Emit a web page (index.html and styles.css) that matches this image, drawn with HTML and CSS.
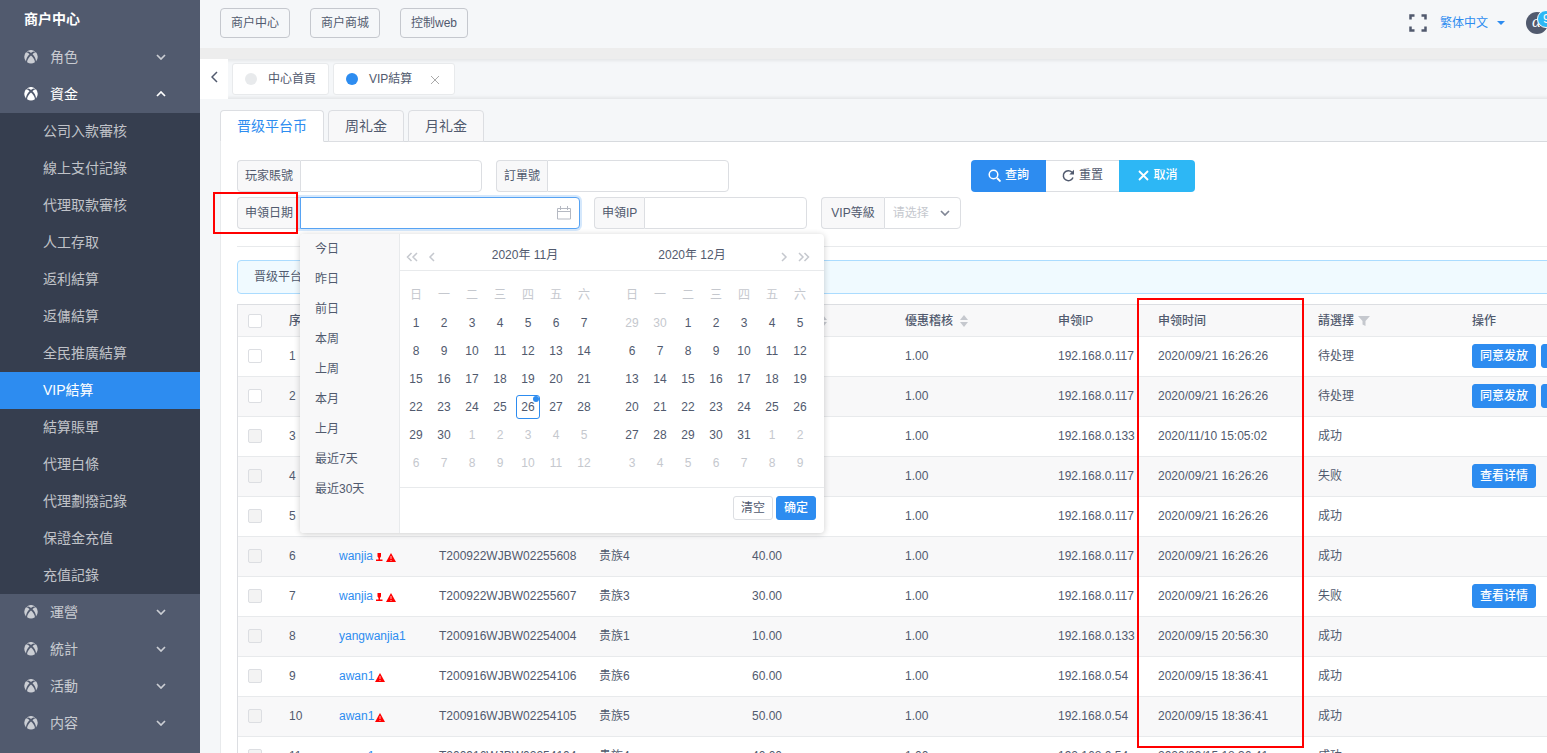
FILE: index.html
```html
<!DOCTYPE html>
<html lang="zh-Hans">
<head>
<meta charset="utf-8">
<title>VIP結算</title>
<link rel="stylesheet" href="styles.css">
</head>
<body>
<svg class="defs" aria-hidden="true">
  <symbol id="xbox" viewBox="0 0 14 14"><path fill="currentColor" d="M7 3.1C5.6 2 4 1.200 2.900 1.400A7 6.700 0 0 1 11.100 1.400C10 1.200 8.400 2 7 3.100ZM2 2.300C3.200 2.300 4.600 3.200 5.500 4.200C3.600 6.200 2 8.800 2 11.400A6.800 6.800 0 0 1 2 2.300ZM12 2.300A6.800 6.800 0 0 1 12 11.400C12 8.800 10.400 6.200 8.500 4.200C9.400 3.200 10.800 2.300 12 2.300ZM7 5.600C8.800 7.200 11 10 10.900 12.200A7 7 0 0 1 3.100 12.200C3 10 5.200 7.200 7 5.600Z"/></symbol>
  <symbol id="down" viewBox="0 0 10 6"><path d="M1 1l4 4 4-4" fill="none" stroke="currentColor" stroke-width="1.700"/></symbol>
  <symbol id="up" viewBox="0 0 10 6"><path d="M1 5l4-4 4 4" fill="none" stroke="currentColor" stroke-width="1.700"/></symbol>
  <symbol id="sort" viewBox="0 0 8 12"><path d="M0 5l4-5 4 5zM0 7l4 5 4-5z" fill="currentColor"/></symbol>
  <symbol id="warn" viewBox="0 0 10 9"><path d="M5 0l5 9H0z" fill="#f00"/><path d="M5 3v3M5 7v1" stroke="#fff" stroke-opacity=".7"/></symbol>
  <symbol id="person" viewBox="0 0 8 8"><path d="M2.500 0h3.500v3.500L5 5v1.500H7.500V8H1V6.500h2.500V5L2.500 3.500z" fill="#f00"/></symbol>
</svg>
<div class="app">
  <nav class="sidebar">
    <h1 class="brand">商户中心</h1>
    <button class="menu"><svg class="game"><use href="#xbox"/></svg><span>角色</span><svg class="chev"><use href="#down"/></svg></button>
    <button class="menu open"><svg class="game"><use href="#xbox"/></svg><span>資金</span><svg class="chev"><use href="#up"/></svg></button>
    <div class="submenu">
      <a href="#">公司入款審核</a>
      <a href="#">線上支付記錄</a>
      <a href="#">代理取款審核</a>
      <a href="#">人工存取</a>
      <a href="#">返利結算</a>
      <a href="#">返傭結算</a>
      <a href="#">全民推廣結算</a>
      <a href="#" class="current">VIP結算</a>
      <a href="#">結算賬單</a>
      <a href="#">代理白條</a>
      <a href="#">代理劃撥記錄</a>
      <a href="#">保證金充值</a>
      <a href="#">充值記錄</a>
    </div>
    <button class="menu"><svg class="game"><use href="#xbox"/></svg><span>運營</span><svg class="chev"><use href="#down"/></svg></button>
    <button class="menu"><svg class="game"><use href="#xbox"/></svg><span>統計</span><svg class="chev"><use href="#down"/></svg></button>
    <button class="menu"><svg class="game"><use href="#xbox"/></svg><span>活動</span><svg class="chev"><use href="#down"/></svg></button>
    <button class="menu"><svg class="game"><use href="#xbox"/></svg><span>内容</span><svg class="chev"><use href="#down"/></svg></button>
  </nav>

  <main class="main">
    <header class="topbar">
      <button class="link-btn">商户中心</button>
      <button class="link-btn">商户商城</button>
      <button class="link-btn">控制web</button>
      <div class="tools">
        <button class="full" aria-label="全屏"><svg viewBox="0 0 18 18"><path d="M1.500 5.500V1.500H5.500M12.500 1.500h4V5.500M16.500 12.500v4H12.500M5.500 16.500H1.500V12.500" fill="none" stroke="#515a6e" stroke-width="2.500"/></svg></button>
        <button class="lang">繁体中文<svg viewBox="0 0 8 4"><path d="M0 0h8L4 4z" fill="#2d8cf0"/></svg></button>
        <div class="avatar"><span class="face">α</span><span class="badge">9</span></div>
      </div>
    </header>
    <div class="tags">
      <button class="scroll" aria-label="向左"><svg viewBox="0 0 7 12"><path d="M6 1L1 6l5 5" fill="none" stroke="#515a6e" stroke-width="1.500"/></svg></button>
      <div class="tag"><i class="dot"></i>中心首頁</div>
      <div class="tag"><i class="dot on"></i>VIP結算<button class="close" aria-label="關閉"><svg viewBox="0 0 8 8"><path d="M0 0l8 8M8 0L0 8" stroke="#aaa" fill="none"/></svg></button></div>
    </div>

    <div class="page">
      <div class="tabs">
        <button class="tab active">晋级平台币</button>
        <button class="tab">周礼金</button>
        <button class="tab">月礼金</button>
      </div>
      <section class="card">
        <form class="filters">
          <div class="row">
            <div class="group"><label for="acc">玩家賬號</label><input id="acc" class="w-mid"></div>
            <div class="group"><label for="ord">訂單號</label><input id="ord" class="w-mid"></div>
            <div class="actions">
              <button type="button" class="act primary"><svg viewBox="0 0 13 13"><circle cx="5.500" cy="5.500" r="4.300" fill="none" stroke="currentColor" stroke-width="1.500"/><path d="M9 9l3.500 3.500" stroke="currentColor" stroke-width="1.800"/></svg>查詢</button>
              <button type="button" class="act plain"><svg viewBox="0 0 13 13"><path d="M11 8.500A5 5 0 1 1 10 3.200" fill="none" stroke="currentColor" stroke-width="1.500"/><path d="M12 .8v4.700H7.300z" fill="currentColor"/></svg>重置</button>
              <button type="button" class="act info"><svg viewBox="0 0 13 13"><path d="M2 2l9 9M11 2l-9 9" stroke="currentColor" stroke-width="1.800"/></svg>取消</button>
            </div>
          </div>
          <div class="row second">
            <div class="group date"><label for="date">申領日期</label><input id="date" class="w-date">
              <svg class="cal-icon" viewBox="0 0 14 14"><path d="M.5 2.500h13v10.500H.5zM.5 5.500h13M3.500 0v4M10.500 0v4" fill="none" stroke="#b5b9c2"/></svg>
              <div class="picker">
                <ul class="shortcuts"><li>今日</li><li>昨日</li><li>前日</li><li>本周</li><li>上周</li><li>本月</li><li>上月</li><li>最近7天</li><li>最近30天</li></ul>
                <div class="picker-body">
                  <div class="months">
                    <div class="month">
                      <div class="month-head"><span class="arrows"><svg viewBox="0 0 12 10"><path d="M5.500 1l-4 4 4 4M11 1L7 5l4 4"/></svg><svg viewBox="0 0 12 10"><path d="M8 1L4 5l4 4"/></svg></span><span class="title">2020年 11月</span></div>
                      <table class="days">
                        <tr><th>日</th><th>一</th><th>二</th><th>三</th><th>四</th><th>五</th><th>六</th></tr>
                        <tr><td>1</td><td>2</td><td>3</td><td>4</td><td>5</td><td>6</td><td>7</td></tr>
                        <tr><td>8</td><td>9</td><td>10</td><td>11</td><td>12</td><td>13</td><td>14</td></tr>
                        <tr><td>15</td><td>16</td><td>17</td><td>18</td><td>19</td><td>20</td><td>21</td></tr>
                        <tr><td>22</td><td>23</td><td>24</td><td>25</td><td><span class="today">26</span></td><td>27</td><td>28</td></tr>
                        <tr><td>29</td><td>30</td><td class="off">1</td><td class="off">2</td><td class="off">3</td><td class="off">4</td><td class="off">5</td></tr>
                        <tr class="off"><td>6</td><td>7</td><td>8</td><td>9</td><td>10</td><td>11</td><td>12</td></tr>
                      </table>
                    </div>
                    <div class="month">
                      <div class="month-head"><span class="title">2020年 12月</span><span class="arrows end"><svg viewBox="0 0 12 10"><path d="M4 1l4 4-4 4"/></svg><svg viewBox="0 0 12 10"><path d="M1 1l4 4-4 4M6.500 1l4 4-4 4"/></svg></span></div>
                      <table class="days">
                        <tr><th>日</th><th>一</th><th>二</th><th>三</th><th>四</th><th>五</th><th>六</th></tr>
                        <tr><td class="off">29</td><td class="off">30</td><td>1</td><td>2</td><td>3</td><td>4</td><td>5</td></tr>
                        <tr><td>6</td><td>7</td><td>8</td><td>9</td><td>10</td><td>11</td><td>12</td></tr>
                        <tr><td>13</td><td>14</td><td>15</td><td>16</td><td>17</td><td>18</td><td>19</td></tr>
                        <tr><td>20</td><td>21</td><td>22</td><td>23</td><td>24</td><td>25</td><td>26</td></tr>
                        <tr><td>27</td><td>28</td><td>29</td><td>30</td><td>31</td><td class="off">1</td><td class="off">2</td></tr>
                        <tr class="off"><td>3</td><td>4</td><td>5</td><td>6</td><td>7</td><td>8</td><td>9</td></tr>
                      </table>
                    </div>
                  </div>
                  <div class="confirm"><button type="button" class="small ghost">清空</button><button type="button" class="small">确定</button></div>
                </div>
              </div>
            </div>
            <div class="group"><label for="ip">申領IP</label><input id="ip" class="w-ip"></div>
            <div class="group vip"><label for="vip">VIP等級</label><select id="vip"><option>请选择</option></select><svg class="select-arrow"><use href="#down"/></svg></div>
          </div>
        </form>
        <div class="notice">晋级平台币</div>
        <table class="grid">
          <colgroup><col class="c-check"><col class="c-no"><col class="c-100"><col class="c-160"><col class="c-153"><col class="c-153"><col class="c-153"><col class="c-100"><col class="c-160"><col class="c-154"><col class="c-ops"></colgroup>
          <thead><tr><th class="chk"><input type="checkbox" aria-label="全選"></th><th>序</th><th></th><th></th><th></th><th class="sort-only"><span class="cell"><svg class="sort"><use href="#sort"/></svg></span></th><th><span class="cell">優惠稽核<svg class="sort"><use href="#sort"/></svg></span></th><th>申领IP</th><th>申领时间</th><th><span class="cell">請選擇<svg class="filter" viewBox="0 0 12 10"><path d="M0 0h12L7.500 5v5l-3-1.500V5z" fill="#c5c8ce"/></svg></span></th><th>操作</th></tr></thead>
          <tbody>
            <tr><td class="chk"><input type="checkbox" aria-label="1"></td><td>1</td><td></td><td></td><td></td><td></td><td>1.00</td><td>192.168.0.117</td><td>2020/09/21 16:26:26</td><td>待处理</td><td><div class="ops"><button class="small">同意发放</button><button class="small">拒绝发放</button></div></td></tr>
            <tr><td class="chk"><input type="checkbox" aria-label="2"></td><td>2</td><td></td><td></td><td></td><td></td><td>1.00</td><td>192.168.0.117</td><td>2020/09/21 16:26:26</td><td>待处理</td><td><div class="ops"><button class="small">同意发放</button><button class="small">拒绝发放</button></div></td></tr>
            <tr><td class="chk"><input type="checkbox" disabled aria-label="3"></td><td>3</td><td></td><td></td><td></td><td></td><td>1.00</td><td>192.168.0.133</td><td>2020/11/10 15:05:02</td><td>成功</td><td></td></tr>
            <tr><td class="chk"><input type="checkbox" disabled aria-label="4"></td><td>4</td><td></td><td></td><td></td><td></td><td>1.00</td><td>192.168.0.117</td><td>2020/09/21 16:26:26</td><td>失败</td><td><div class="ops"><button class="small">查看详情</button></div></td></tr>
            <tr><td class="chk"><input type="checkbox" disabled aria-label="5"></td><td>5</td><td></td><td></td><td></td><td></td><td>1.00</td><td>192.168.0.117</td><td>2020/09/21 16:26:26</td><td>成功</td><td></td></tr>
            <tr><td class="chk"><input type="checkbox" disabled aria-label="6"></td><td>6</td><td><a href="#">wanjia</a><svg class="person"><use href="#person"/></svg><svg class="warn"><use href="#warn"/></svg></td><td>T200922WJBW02255608</td><td>贵族4</td><td>40.00</td><td>1.00</td><td>192.168.0.117</td><td>2020/09/21 16:26:26</td><td>成功</td><td></td></tr>
            <tr><td class="chk"><input type="checkbox" disabled aria-label="7"></td><td>7</td><td><a href="#">wanjia</a><svg class="person"><use href="#person"/></svg><svg class="warn"><use href="#warn"/></svg></td><td>T200922WJBW02255607</td><td>贵族3</td><td>30.00</td><td>1.00</td><td>192.168.0.117</td><td>2020/09/21 16:26:26</td><td>失败</td><td><div class="ops"><button class="small">查看详情</button></div></td></tr>
            <tr><td class="chk"><input type="checkbox" disabled aria-label="8"></td><td>8</td><td><a href="#">yangwanjia1</a></td><td>T200916WJBW02254004</td><td>贵族1</td><td>10.00</td><td>1.00</td><td>192.168.0.133</td><td>2020/09/15 20:56:30</td><td>成功</td><td></td></tr>
            <tr><td class="chk"><input type="checkbox" disabled aria-label="9"></td><td>9</td><td><a href="#">awan1</a><svg class="warn"><use href="#warn"/></svg></td><td>T200916WJBW02254106</td><td>贵族6</td><td>60.00</td><td>1.00</td><td>192.168.0.54</td><td>2020/09/15 18:36:41</td><td>成功</td><td></td></tr>
            <tr><td class="chk"><input type="checkbox" disabled aria-label="10"></td><td>10</td><td><a href="#">awan1</a><svg class="warn"><use href="#warn"/></svg></td><td>T200916WJBW02254105</td><td>贵族5</td><td>50.00</td><td>1.00</td><td>192.168.0.54</td><td>2020/09/15 18:36:41</td><td>成功</td><td></td></tr>
            <tr><td class="chk"><input type="checkbox" disabled aria-label="11"></td><td>11</td><td><a href="#">awan1</a><svg class="warn"><use href="#warn"/></svg></td><td>T200916WJBW02254104</td><td>贵族4</td><td>40.00</td><td>1.00</td><td>192.168.0.54</td><td>2020/09/15 18:36:41</td><td>成功</td><td></td></tr>
          </tbody>
        </table>
      </section>
    </div>
  </main>
</div>
<div class="mark mark-date"></div>
<div class="mark mark-time"></div>
</body>
</html>
```

FILE: styles.css
```css
* { box-sizing: border-box; }
body { margin: 0; height: 100vh; overflow: hidden; position: relative; font: 12px/18px "Liberation Sans", "Noto Sans CJK SC", sans-serif; color: #515a6e; background: #f5f7f9; }
button, input, select { font: inherit; color: inherit; margin: 0; }
button { cursor: pointer; padding: 0; border: 0; background: none; white-space: nowrap; }
a { color: #2d8cf0; text-decoration: none; }
svg { flex: none; }
.defs { position: absolute; width: 0; height: 0; }
.app { display: flex; height: 100vh; }

.sidebar { flex: none; width: 200px; background: #515a6e; overflow: hidden; }
.brand { margin: 0; padding-left: 24px; height: 39px; font-size: 14px; line-height: 39px; color: #fff; }
.menu { display: flex; align-items: center; width: 100%; height: 37px; padding: 0 34px 2px 24px; font-size: 14px; color: rgba(255,255,255,.7); }
.menu span { flex: 1; margin-left: 12px; text-align: left; }
.menu.open { color: #fff; }
.game { width: 14px; height: 14px; }
.chev { width: 10px; height: 6px; }
.submenu { background: #363e4f; }
.submenu a { display: block; height: 37px; padding-left: 43px; font-size: 14px; line-height: 37px; color: rgba(255,255,255,.7); }
.submenu .current { background: #2d8cf0; color: #fff; }

.main { flex: 1; min-width: 0; overflow: hidden; }
.topbar { display: flex; align-items: flex-start; gap: 20px; height: 48px; padding: 8px 0 0 20px; }
.link-btn { height: 30px; padding: 0 10px; border: 1px solid #c5c8ce; border-radius: 4px; }
.tools { display: flex; align-items: center; height: 30px; margin-left: auto; }
.full { width: 18px; height: 18px; margin-right: 13px; }
.full svg { display: block; }
.lang { display: flex; align-items: center; gap: 9px; margin-right: 21px; color: #2d8cf0; }
.lang svg { width: 8px; height: 4px; }
.avatar { position: relative; width: 21px; height: 30px; overflow: hidden; }
.face { display: block; width: 22px; height: 22px; margin-top: 4px; border-radius: 11px; background: #515a6e; color: #fff; font: italic 17px/20px "Liberation Serif", serif; text-indent: 6px; }
.badge { position: absolute; left: 11px; top: 2px; width: 18px; height: 18px; border: 1px solid #fff; border-radius: 9px; background: #2db7f5; color: #fff; line-height: 16px; text-indent: 5px; }

.tags { display: flex; align-items: center; gap: 4px; height: 51px; margin-right: -5px; border-top: 11px solid #ededed; box-shadow: inset 0 0 3px 2px rgba(100,100,100,.1); }
.scroll { width: 28px; height: 40px; background: #fff; }
.scroll svg { width: 7px; height: 12px; }
.tag { display: flex; align-items: center; height: 32px; padding: 0 12px; border: 1px solid #e8eaec; border-radius: 3px; background: #fff; }
.dot { width: 12px; height: 12px; margin-right: 11px; border-radius: 6px; background: #e8eaec; }
.dot.on { background: #2d8cf0; }
.close { display: flex; margin: 2px 3px 0 19px; }
.close svg { width: 8px; height: 8px; }

.page { padding: 11px 0 0 20px; }
.tabs { display: flex; gap: 4px; height: 32px; border-bottom: 1px solid #d7dade; }
.tab { height: 32px; padding: 0 16px; border: 1px solid #dcdee2; border-radius: 4px 4px 0 0; background: #f8f8f9; font-size: 14px; }
.tab.active { background: #fff; border-bottom-color: #fff; color: #2d8cf0; }
.card { background: #fff; padding: 18px 0 0 16px; border-left: 1px solid #e8eaec; }
.filters { border-bottom: 1px solid #e8eaec; height: 87px; margin-bottom: 13px; }
.row { display: flex; align-items: center; gap: 14px; }
.second { margin-top: 5px; }
.group { display: flex; position: relative; height: 32px; }
.group label { padding: 0 7px; border: 1px solid #dcdee2; border-right: 0; border-radius: 4px 0 0 4px; background: #f8f8f9; line-height: 30px; white-space: nowrap; }
.group input, .group select { height: 32px; padding: 0 8px; border: 1px solid #dcdee2; border-radius: 0 4px 4px 0; background: #fff; outline: 0; }
.w-mid { width: 182px; }
.w-ip { width: 163px; }
.group .w-date { width: 280px; border-color: #57a3f3; box-shadow: 0 0 0 2px rgba(45,140,240,.2); }
.cal-icon { position: absolute; right: 9px; top: 9px; width: 14px; height: 14px; }
.vip label { padding: 0 9px; }
.group select { width: 77px; appearance: none; color: #c5c8ce; }
.select-arrow { position: absolute; right: 11px; top: 13px; width: 10px; height: 6px; color: #808695; pointer-events: none; }
.actions { display: flex; margin-left: 228px; }
.act { display: flex; align-items: center; justify-content: center; gap: 4px; width: 75px; height: 32px; padding-bottom: 2px; }
.act svg { width: 13px; height: 13px; }
.primary { background: #2d8cf0; color: #fff; font-weight: 500; border-radius: 4px 0 0 4px; }
.plain { width: 73px; border: 1px solid #dcdee2; border-width: 1px 0; }
.info { width: 76px; background: #2db7f5; color: #fff; font-weight: 500; border-radius: 0 4px 4px 0; }
.notice { height: 34px; margin-right: -20px; padding: 0 16px; border: 1px solid #abdcff; border-radius: 4px; background: #f0faff; line-height: 32px; }

.picker { position: absolute; z-index: 5; top: 37px; left: 63px; display: flex; width: 524px; height: 299px; border-radius: 4px; background: #fff; box-shadow: 0 1px 6px rgba(0,0,0,.2); overflow: hidden; }
.shortcuts { flex: none; width: 100px; margin: 0; padding: 0; list-style: none; background: #f8f8f9; border-right: 1px solid #e8eaec; }
.shortcuts li { padding-left: 15px; line-height: 30px; }
.picker-body { flex: 1; }
.months { display: flex; }
.month { flex: 1; }
.month-head { display: flex; height: 37px; border-bottom: 1px solid #e8eaec; line-height: 42px; }
.title { flex: 1; padding-right: 6px; text-align: center; white-space: nowrap; }
.month + .month .title { padding-right: 0; }
.arrows { display: flex; align-items: center; gap: 8px; padding: 9px 6px 0; }
.arrows.end { padding-right: 14px; }
.arrows svg { width: 12px; height: 10px; fill: none; stroke: #c5c8ce; stroke-width: 1.500px; }
.days { margin: 10px 0 10px 2px; border-collapse: collapse; }
.month + .month .days { margin-left: 6px; }
.days th, .days td { width: 28px; height: 28px; padding: 0; text-align: center; font-weight: normal; }
.days th, .days .off { color: #c5c8ce; }
.today { display: block; position: relative; width: 24px; height: 24px; margin: 0 auto; border: 1px solid #2d8cf0; border-radius: 3px; line-height: 22px; }
.today::after { content: ""; position: absolute; top: 0; right: 0; width: 6px; height: 6px; border-radius: 3px; background: #2d8cf0; }
.confirm { display: flex; justify-content: flex-end; gap: 3px; padding: 8px; border-top: 1px solid #e8eaec; }
.small { height: 24px; padding: 0 7px; border: 1px solid #2d8cf0; border-radius: 3px; background: #2d8cf0; color: #fff; font-weight: 500; line-height: 22px; }
.small.ghost { border-color: #dcdee2; background: #fff; color: #515a6e; font-weight: 400; }

.grid { width: 1465px; margin-top: 10px; table-layout: fixed; border-collapse: separate; border-spacing: 0; border: 1px solid #dcdee2; }
.c-check { width: 33px; }
.c-no { width: 50px; }
.c-100 { width: 100px; }
.c-160 { width: 160px; }
.c-153 { width: 153px; }
.c-154 { width: 154px; }
.c-ops { width: auto; }
.grid th, .grid td { height: 40px; padding: 0 0 2px 18px; border-bottom: 1px solid #e8eaec; text-align: left; white-space: nowrap; }
.grid th { height: 32px; padding-bottom: 0; background: #f8f8f9; font-weight: 500; }
.grid tr:nth-child(even) td { background: #f8f8f9; }
.grid .chk { padding-left: 10px; }
.grid .sort-only { padding-left: 85px; }
.chk input { display: block; appearance: none; width: 14px; height: 14px; border: 1px solid #dcdee2; border-radius: 2px; background: #fff; }
.chk input:disabled { background: #f3f3f3; }
.cell { display: flex; align-items: center; gap: 7px; }
.sort { width: 8px; height: 12px; color: #c5c8ce; }
.filter { width: 12px; height: 10px; margin-left: -3px; }
.person { width: 8px; height: 8px; margin-left: 2px; vertical-align: -1px; }
.warn { width: 10px; height: 9px; margin-left: 3px; vertical-align: -2px; }
a + .warn { margin-left: 1px; }
.ops { display: flex; gap: 5px; }

.mark { position: absolute; z-index: 10; border: 2px solid #f00; pointer-events: none; }
.mark-date { left: 213px; top: 192px; width: 85px; height: 42px; }
.mark-time { left: 1137px; top: 298px; width: 167px; height: 450px; }
```
